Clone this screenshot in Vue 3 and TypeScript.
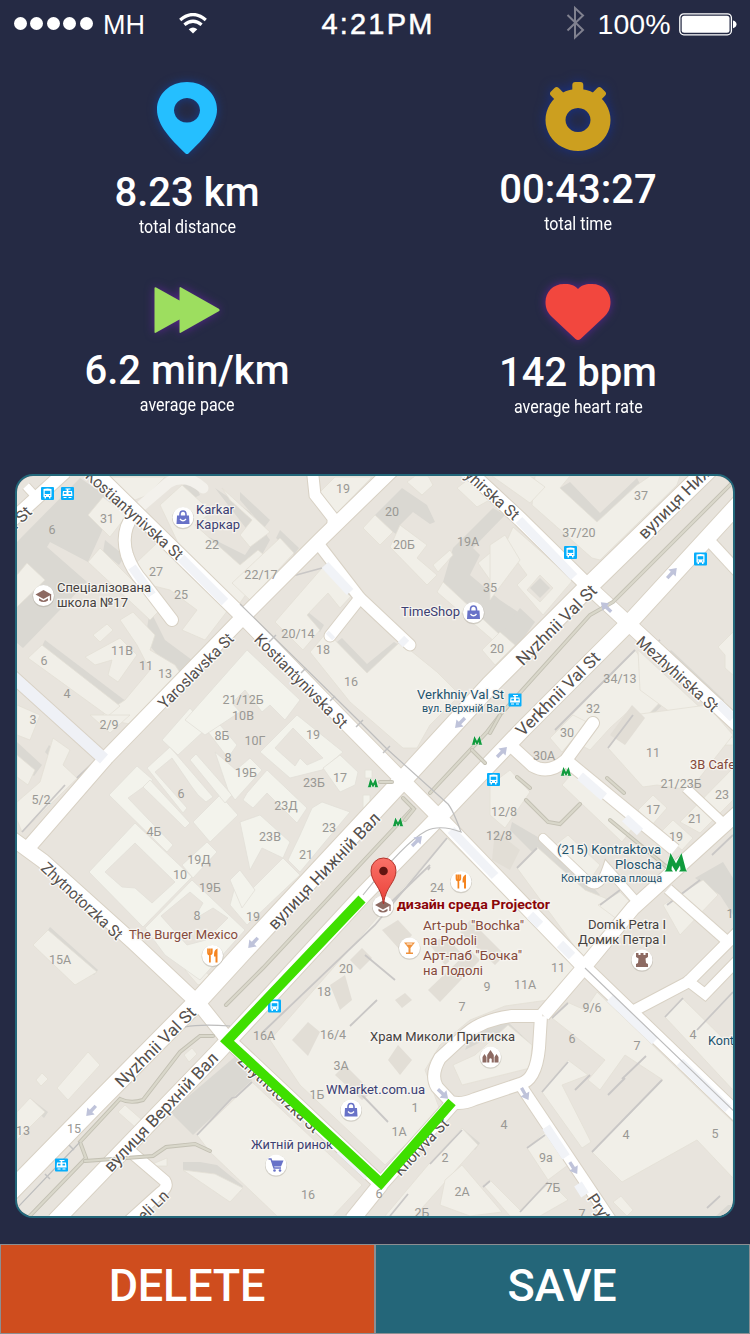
<script setup lang="ts">
interface Stat { kind: 'pin' | 'timer' | 'pace' | 'heart'; value: string; label: string; iconHeight: number; top: number; gap: number }
interface Road { d: string; w: number; round?: boolean; tint?: boolean }
interface Street { text: string; x: number; y: number; angle: number; length?: number; size?: number; anchor?: 'start' | 'middle' | 'end' }
interface Place { text: string; x: number; y: number; length: number; tone: string; size?: number }
type Spot = [number, number]
type HouseNumber = [string, number, number]
type Arrow = [number, number, number]

const stats: Stat[] = [
  { kind: 'pin', value: '8.23 km', label: 'total distance', iconHeight: 72, top: 0, gap: 19 },
  { kind: 'timer', value: '00:43:27', label: 'total time', iconHeight: 69, top: 0, gap: 19 },
  { kind: 'pace', value: '6.2 min/km', label: 'average pace', iconHeight: 46, top: 5, gap: 18 },
  { kind: 'heart', value: '142 bpm', label: 'average heart rate', iconHeight: 56, top: 2, gap: 13 },
]

const shades: string[] = [
  'M80 478L115 502L88 562L50 542L47 547L87 582L23 648L17 643V542Z',
  'M105 540L125 556L119 565L103 552Z', 'M150 610L165 640L192 660L178 680L145 640Z',
  'M45 640L127 702L117 712L40 650Z', 'M215 488L250 512L270 540L258 562L240 565L205 535L215 540L245 555L255 540Z',
  'M180 487L193 478L200 495L190 500Z', 'M240 492L270 520L264 528L240 500Z', 'M280 530L299 548L294 555L276 538Z',
  'M308 612L324 625L320 632L304 618Z', 'M333 645L368 675L399 645L394 642L367 664L342 638Z',
  'M375 515L402 488L427 505L435 522L430 524L413 512L400 525L412 535L405 540L390 530Z',
  'M453 548L493 508L505 515L473 548L480 555L470 575L500 600L518 612L505 640L443 582Z',
  'M560 488L597 526L640 484L637 478L600 513L570 482Z', 'M540 578L550 588L540 598L530 588Z',
  'M500 635L520 608L535 622L517 647Z', 'M671 650L724 700L719 706L665 657Z', 'M643 672L669 698L646 722L640 714L655 698L638 682Z',
  'M17 742L42 765L34 776L17 762Z', 'M49 745L64 759L58 766L45 752Z', 'M50 927L98 970L94 975L46 933Z',
  'M695 878L723 862L733 878V915L720 895Z', 'M512 822L560 850L600 895L593 904L545 865L510 830Z',
  'M237 1055L252 1080L193 1135L170 1112Z', 'M30 1098L48 1112L44 1118L28 1104Z', 'M183 1162H200L217 1165L243 1186L240 1192L215 1174L183 1171Z',
  'M462 1128L480 1143L475 1150L458 1135Z', 'M476 1022L508 1022L532 1045L526 1052L500 1032L465 1050Z', 'M716 1216L728 1205H733V1216Z',
]

const buildings: string[] = [
  'M103 477H165L148 495L135 500Z', 'M103 497L127 515L110 537L88 515Z', 'M17 575L27 563L45 580L17 607Z',
  'M100 548L150 598L160 610L150 620L88 562Z', 'M157 543L228 610L205 640L182 630L197 610L170 590L150 585L137 562Z',
  'M120 620L133 612L155 635L150 650L175 665L185 680L135 725L98 718L125 700L150 670L137 645Z', 'M85 657L120 638L137 655L118 682L108 675L112 660L95 665Z',
  'M93 635L107 624L113 630L100 642Z', 'M28 658L42 645L120 706L108 716Z', 'M17 705L40 715L30 740L17 735Z',
  'M160 505L182 485L212 512L195 525L240 565L258 550L270 560L235 610L187 562Z', 'M222 488L270 532L250 547L240 535L252 520L230 500Z',
  'M317 495L335 477H372L337 513Z', 'M280 538L294 553L250 600L232 583Z',
  'M322 568L352 595L340 608L328 593L307 615L320 630L303 650L275 622Z',
  'M310 652L327 632L367 673L400 642L437 672L460 695L430 725L417 748H403L350 702Z',
  'M363 528L375 515L393 532L380 545Z', 'M400 525L427 545L417 558L437 575L427 585L390 547Z', 'M433 565L450 550L453 555L438 572Z',
  'M443 582L500 635L495 642L437 592Z', 'M478 563L508 538V570L490 580Z', 'M482 650L500 632L515 645L495 665Z',
  'M407 482L415 476H428L433 485L422 495Z', 'M457 488L470 478L493 498L477 507Z',
  'M535 476H570L560 488L597 522L637 485L650 476H680L677 485L600 560L592 558L532 505Z', 'M492 476H530L545 487L530 503Z',
  'M513 527L573 580L543 615L517 585L527 575L505 545ZM540 575L527 590L540 602L553 588Z', 'M490 545L505 535L520 560L490 600Z',
  'M555 732L635 650L667 695L645 718L632 708L610 728L590 750Z', 'M638 650L733 738V745L715 745L640 690Z', 'M733 632L718 647L725 655V668L733 675Z',
  'M17 802L40 782L53 738L70 750L63 765L77 778L98 758L22 832L17 820Z', 'M17 755L35 770L28 785L17 777Z', 'M90 715H130L110 733Z',
  'M270 1040L447 838L492 882L580 965L548 1000L505 1006L470 1020L440 1045L425 1070L440 1110L385 1165L300 1085Z',
  'M608 748L633 715L707 705L733 735L690 790L657 785L643 787Z', 'M638 810L653 795L667 808L652 825Z',
  'M660 833L673 820L693 838L682 850Z', 'M680 822L733 768V800L700 833Z', 'M550 738L573 715L587 722L562 752Z',
  'M562 785L575 770L635 825L622 842Z', 'M490 785L510 770L530 792L505 828L490 815Z', 'M517 868L537 847L585 890L605 898L630 915L583 958Z',
  'M555 845L568 835L600 865L590 880Z', 'M663 905L703 880L718 895L680 935Z', 'M598 905L620 892L640 912L625 925Z',
  'M597 992L733 1122V1178L697 1140L622 1182L592 1152L663 1080L625 1055L600 1090L588 1080L605 1060L552 1018L567 1002L585 1010Z',
  'M665 1017L682 998L733 1048V1090Z', 'M542 1092L568 1060L588 1075L562 1085L591 1142L582 1148Z', 'M527 1148L545 1132L572 1162L548 1180Z',
  'M428 1165L462 1128L478 1145L415 1216H385Z', 'M445 1180L462 1165L502 1212L470 1216L440 1205Z', 'M483 1185L490 1180L520 1210L550 1182L568 1200L540 1216H510Z',
  'M453 1065L475 1055L508 1025L532 1045L530 1068L462 1085Z', 'M197 1135L252 1082L362 1185L333 1216H277L210 1152Z',
  'M57 1088L88 1052L100 1065L68 1100Z', 'M36 1080L42 1073L48 1079L41 1086Z', 'M17 1112L30 1098L45 1112L17 1140Z', 'M33 945L48 930L97 972L75 985Z',
  'M183 1170L215 1174L243 1188L230 1202Z', 'M118 1112L125 1105L142 1120L135 1127Z', 'M184 1055L192 1048L197 1054L189 1062Z', 'M150 1165L167 1158V1166H152Z',
  'M613 1202L621 1196L633 1210L627 1216Z', 'M185 970L197 965L215 980L198 985Z',
]

const courtyards: string[] = [
  'M109 795L137 766L153 780L128 798L173 845L167 852Z', 'M143 787L150 780L190 823L185 828Z',
  'M147 768L170 747L213 797L206 802L198 795L192 787L172 758L155 772L187 808L183 813Z', 'M193 822L220 795L238 815L210 842Z',
  'M89 872L135 823L192 877L143 927ZM105 872L122 887L135 888L152 903L175 882L135 843Z',
  'M145 928L192 880L245 930L200 980L165 955ZM161 916L190 892L203 903L193 920L213 908L228 918L206 940L187 945Z',
  'M182 865L207 842L217 852L193 878Z', 'M162 740L190 708L207 728L178 755Z', 'M205 728L215 719L237 745L228 758Z', 'M190 760L196 754L232 795L225 803Z',
  'M185 720L247 650L300 700L285 720L270 705L262 712L245 690L232 703L240 712L205 735Z', 'M235 800L262 770L250 758L236 770L215 752L228 790Z',
  'M260 752L297 715L343 752L322 770L290 778ZM275 748L293 728L323 758L307 765L300 758L295 766Z',
  'M323 768L340 755L358 772L355 785L340 792Z', 'M247 793L267 770L307 808L297 823L267 793L253 808L243 800Z',
  'M312 808L322 802L350 812L300 872L288 860L300 835Z', 'M240 822L260 815L290 842L283 858L262 848L250 870Z',
  'M283 858L300 875L247 925L230 905L238 875L246 895Z', 'M365 770H372V778H365Z', 'M363 795H370V808H363Z', 'M230 880L240 870L255 890L242 908Z',
]

const patches: string[] = [
  'M382 930L398 920L412 935L400 950Z', 'M430 945L445 935L460 952L445 965Z', 'M292 1040L308 1022L320 1032L308 1056Z', 'M330 985L345 975L352 1000L340 1010Z',
  'M350 960L362 948L372 958L360 970Z', 'M335 1075L345 1065L372 1092L362 1100Z', 'M470 920L505 955L495 965L460 932Z', 'M398 1045L412 1060L400 1075L388 1060Z',
  'M395 1000L405 993L412 1000L402 1008Z', 'M428 990L470 950L480 960L440 1002Z', 'M632 705L645 718L625 745L610 735Z', 'M495 830L520 850L510 870L492 860Z',
]

const edges: string[] = [
  'M263 1032L375 925L447 838', 'M383 910L430 865', 'M197 1135L232 1098L236 1097L252 1082', 'M552 1018L568 1003', 'M592 1152L662 1080M622 1079L646 1056M575 1090L590 1075M608 1095L625 1078',
  'M665 1017L683 998M697 1030L733 992', 'M517 868L537 848M600 905L620 890M667 905L700 880', 'M608 748L633 715M555 730L635 650M648 650L660 640', 'M527 1148L545 1135M520 1212L548 1182M483 1187L490 1181',
  'M542 1092L568 1062M430 1164L462 1130M388 1122L360 1093M390 1216L408 1194', 'M22 832L65 785M77 778L98 758', 'M267 583L322 568M267 588L288 565M183 568L228 610', 'M315 545L350 595', 'M712 855L733 835M707 1208L720 1196', 'M350 1026L377 1000M365 955L395 980M428 870L430 867',
]

const roads: Road[] = [
  { d: 'M93 470L243 617L345 722L440 818L585 968L740 1117', w: 14 }, { d: 'M395 467L320 540L243 617L107 757L28 848', w: 14 },
  { d: 'M10 837L43 861L133 942L200 1005L228 1040L381 1184', w: 14 }, { d: 'M711 467L590 585L490 685L400 783L240 955L197 1002L100 1100L10 1192', w: 18 },
  { d: 'M742 500L630 622L523 729L440 816L363 895L217 1053L55 1221', w: 16 }, { d: 'M464 467L520 519L590 588L630 625L740 727', w: 14 },
  { d: 'M704 535L742 576', w: 11 }, { d: 'M312 467L315 495L333 518V530', w: 11 }, { d: 'M320 546L360 598L410 645', w: 11, round: true }, { d: 'M360 598L330 636', w: 11, round: true },
  { d: 'M134 514Q120 532 127 555Q132 570 143 582L172 620', w: 12, round: true }, { d: 'M10 522L65 472', w: 13 }, { d: 'M26 486L36 497', w: 8 },
  { d: 'M10 674L104 759', w: 12, tint: true }, { d: 'M510 745L533 766Q549 775 566 760L593 723', w: 12, round: true }, { d: 'M568 762L675 850', w: 12 },
  { d: 'M740 811L633 908L585 966L543 1015', w: 14 }, { d: 'M686 788L722 822', w: 9 }, { d: 'M543 838L590 883Q600 889 607 868L637 902', w: 8, round: true },
  { d: 'M668 889L728 942', w: 10 }, { d: 'M635 1010L688 982L740 930', w: 11 }, { d: 'M688 981L705 994L740 958', w: 10, round: true },
  { d: 'M542 1016H512Q484 1019 466 1034L440 1058Q430 1075 437 1087L451 1102Q462 1105 475 1099L520 1084Q536 1080 539 1048L541 1016', w: 12 },
  { d: 'M521 1086L612 1222', w: 11 }, { d: 'M381 1184L453 1103', w: 14 }, { d: 'M381 1184L352 1220', w: 15 }, { d: 'M131 1152L165 1181Q169 1187 160 1193L130 1220', w: 11, round: true },
]

const tints: string[] = [
  'M181 558L225 602', 'M519 520L574 577', 'M325 565L350 592', 'M329 637L332 634', 'M401 639L406 644', 'M132 567L152 595', 'M451 830L495 876', 'M530 915L540 925M560 944L572 956',
  'M610 998L655 1041M680 1062L728 1109', 'M546 1127L566 1157M578 1184L585 1195', 'M340 1150L368 1176', 'M718 703L733 718', 'M580 776L604 797M625 818L640 832',
]

const greenways: string[] = [
  'M738 477L613 602L590 615L500 715L487 732L430 793', 'M413 808L263 968L226 1005', 'M403 798L414 809L405 820', 'M213 1036H200L180 1052L143 1100Q130 1104 120 1099L80 1142L86 1158L25 1221',
  'M85 1161L153 1156L166 1147L195 1144L210 1151', 'M526 800L548 822L560 824L580 804', 'M610 820L668 868M607 778L624 793M517 777L530 788M472 750L485 763', 'M380 782H392M490 733L500 715',
]

const streets: Street[] = [
  { text: 'Kostiantynivska St', x: 134.5, y: 515, angle: 42, length: 125 }, { text: 'Kostiantynivska St', x: 301, y: 681, angle: 45.5, length: 125 },
  { text: 'Yaroslavska St', x: 196, y: 671, angle: -45, length: 99 }, { text: 'Nyzhnii Val St', x: 556.5, y: 625, angle: -45, length: 106, size: 17 },
  { text: 'Verkhnii Val St', x: 558, y: 694, angle: -45, length: 111, size: 17 }, { text: 'вулиця Нижній', x: 641, y: 536, angle: -45, length: 121, size: 17, anchor: 'start' },
  { text: 'Mezhyhirska St', x: 677.5, y: 674, angle: 42, length: 104 }, { text: 'Mezhyhirska St', x: 517, y: 517, angle: 42, length: 104, anchor: 'end' },
  { text: 'вулиця Нижній Вал', x: 324, y: 871, angle: -46.5, length: 154, size: 17 }, { text: 'Zhytnotorzka St', x: 82, y: 901, angle: 43, length: 105 },
  { text: 'Nyzhnii Val St', x: 155.500, y: 1047, angle: -45, length: 106, size: 17 }, { text: 'вулиця Верхній Вал', x: 161, y: 1112, angle: -46.5, length: 157, size: 17 },
  { text: 'eli Ln', x: 166, y: 1193, angle: -44, length: 36, anchor: 'end' }, { text: '. St', x: 29, y: 509, angle: -45, length: 24, anchor: 'end' },
  { text: 'Pryty', x: 591, y: 1195, angle: 57, length: 37, anchor: 'start' }, { text: 'Khoryva St', x: 421, y: 1147, angle: -47, length: 72 },
  { text: 'Zhytnotorzka St', x: 279, y: 1094, angle: 43, length: 105 },
]

const numbers: HouseNumber[] = [
  ['19', 343, 489], ['37', 641, 496], ['6', 52, 530], ['31', 107, 519], ['22', 212, 545], ['20', 392, 512], ['20Б', 404, 545], ['19А', 468, 542], ['37/20', 579, 533],
  ['22/17', 261, 575], ['27', 156, 572], ['25', 181, 595], ['35', 490, 588], ['20/14', 298, 634], ['18', 323, 650], ['16', 351, 682], ['20', 497, 649], ['34/13', 620, 679],
  ['11В', 122, 651], ['11', 146, 666], ['13', 165, 674], ['6', 44, 661], ['4', 67, 694], ['3', 33, 720], ['2/9', 109, 725], ['32', 593, 709], ['21/12Б', 243, 700],
  ['10В', 243, 716], ['8Б', 222, 736], ['10Г', 255, 741], ['19', 313, 735], ['8', 228, 758], ['19Б', 246, 773], ['23Б', 314, 783], ['17', 340, 778], ['30', 567, 733],
  ['30А', 544, 756], ['11', 653, 753], ['21/23Б', 681, 784], ['5/2', 41, 800], ['6', 181, 794], ['23Д', 286, 806], ['17', 653, 810], ['21', 695, 819], ['23', 722, 795],
  ['4Б', 154, 832], ['23В', 270, 837], ['23', 329, 828], ['12/8', 504, 812], ['12/8', 499, 836], ['19', 676, 837], ['19Д', 199, 860], ['21', 306, 855], ['10', 180, 875], ['19Б', 210, 888],
  ['24', 437, 888], ['8', 197, 916], ['19', 253, 917], ['15А', 60, 960], ['20', 346, 969], ['18', 324, 992], ['9', 487, 987], ['11А', 525, 985], ['11', 558, 968], ['16А', 264, 1036],
  ['16/4', 333, 1035], ['7', 462, 1007], ['9/6', 592, 1008], ['6', 572, 1039], ['7', 637, 1046], ['4', 693, 1035], ['3А', 341, 1066], ['1Б', 317, 1095], ['1', 415, 1108],
  ['1А', 399, 1132], ['13', 23, 1131], ['15', 74, 1129], ['2', 445, 1158], ['4', 504, 1125], ['4', 626, 1135], ['5', 715, 1134], ['9а', 546, 1158], ['2А', 462, 1192], ['7Б', 553, 1188],
  ['2Б', 422, 1213], ['16', 308, 1195], ['6', 379, 1194], ['7', 582, 1214], ['1', 730, 914],
]

const places: Place[] = [
  { text: 'Karkar', x: 196, y: 510, length: 38, tone: 'shop' }, { text: 'Каркар', x: 196, y: 525, length: 44, tone: 'shop' },
  { text: 'Спеціалізована', x: 57, y: 588, length: 94, tone: 'plain' }, { text: 'школа №17', x: 57, y: 603, length: 71, tone: 'plain' },
  { text: 'TimeShop', x: 401, y: 612, length: 59, tone: 'shop' }, { text: 'Verkhniy Val St', x: 417, y: 695, length: 87, tone: 'transit' },
  { text: 'вул. Верхній Вал', x: 422, y: 708, length: 83, tone: 'transit', size: 11 }, { text: '3B Cafe', x: 690, y: 765, length: 45, tone: 'food' },
  { text: '(215) Kontraktova', x: 557, y: 850, length: 104, tone: 'transit' }, { text: 'Ploscha', x: 615, y: 865, length: 47, tone: 'transit' },
  { text: 'Контрактова площа', x: 561, y: 878, length: 101, tone: 'transit', size: 11 }, { text: 'The Burger Mexico', x: 129, y: 935, length: 109, tone: 'food' },
  { text: 'дизайн среда Projector', x: 397, y: 905, length: 153, tone: 'target' }, { text: 'Art-pub "Bochka"', x: 423, y: 926, length: 101, tone: 'food' },
  { text: 'na Podoli', x: 423, y: 941, length: 54, tone: 'food' }, { text: 'Арт-паб "Бочка"', x: 423, y: 956, length: 99, tone: 'food' }, { text: 'на Подолі', x: 423, y: 970.500, length: 60, tone: 'food' },
  { text: 'Domik Petra I', x: 588, y: 925, length: 78, tone: 'plain' }, { text: 'Домик Петра I', x: 578, y: 940, length: 88, tone: 'plain' },
  { text: 'Храм Миколи Притиска', x: 370, y: 1037, length: 145, tone: 'plain' }, { text: 'WMarket.com.ua', x: 326, y: 1090, length: 99, tone: 'shop' },
  { text: 'Житній ринок', x: 251, y: 1145, length: 82, tone: 'shop' }, { text: 'Kont', x: 708, y: 1041, length: 26, tone: 'transit' },
]

const buses: Spot[] = [[47.5, 493.5], [570.5, 552.5], [700.5, 559], [493.5, 779.5], [274.5, 1006]]
const trams: Spot[] = [[67.5, 493.5], [515, 700], [61.5, 1165]]
const bags: Spot[] = [[183, 517.5], [473.5, 612.5], [351, 1110]]
const caps: Spot[] = [[43.5, 595.5], [383, 906]]
const forks: Spot[] = [[461, 881.5], [212.5, 955.5]]
const metros: Spot[] = [[477, 740.5], [373, 783], [398, 822], [566, 771.5]]
const arrows: Arrow[] = [[672, 573, -47], [606, 607, -138], [460, 723, 135], [253, 943, 133], [417, 841, -45], [502, 752, -45], [91, 1111, 133], [443, 1094, 43], [525, 1094, 60], [573.5, 1168, 58]]
</script>

<template>
  <div class="screen">
    <header class="status">
      <div class="carrier">
        <span v-for="n in 5" :key="n" class="dot" />
        <span class="name">MH</span>
        <svg class="wifi" width="28" height="21" viewBox="0 0 28 21">
          <path d="M14 20.5L9.7 16.2Q14 12.8 18.3 16.2Z" fill="#fff" />
          <path d="M5.400 11.700Q14 4.800 22.600 11.700M1.200 6.900Q14 -3.800 26.800 6.900" fill="none" stroke="#fff" stroke-width="3.300" />
        </svg>
      </div>
      <div class="clock">4:21PM</div>
      <div class="power">
        <svg class="bluetooth" width="19" height="36" viewBox="0 0 19 36"><path d="M1.5 10L17 25L9 32.5V3L17 10.500L1.500 25.500" fill="none" stroke="#80818f" stroke-width="2" /></svg>
        <span class="percent">100%</span>
        <svg width="58" height="23" viewBox="0 0 58 23">
          <rect x=".8" y=".8" width="51.600" height="21" rx="4" fill="none" stroke="#fff" stroke-width="1.300" />
          <rect x="2.700" y="2.800" width="47.800" height="17" rx="2.500" fill="#fff" />
          <path d="M54 7.500Q57.500 8.500 57.500 11.300T54 15.200Z" fill="#fff" />
        </svg>
      </div>
    </header>

    <section class="stats">
      <article v-for="s in stats" :key="s.kind" class="stat" :class="s.kind" :style="{ paddingTop: s.top + 'px' }">
        <svg v-if="s.kind === 'pin'" class="icon cool" width="60" :height="s.iconHeight" viewBox="0 0 60 72">
          <path fill="#25bfff" fill-rule="evenodd" d="M30 0C13 0 0 12 0 27.500C0 43 13.500 57 28.500 71.400Q30 72.600 31.500 71.400C46.500 57 60 43 60 27.500C60 12 47 0 30 0ZM30 16A13 12.300 0 1 1 29.990 16Z" />
        </svg>
        <svg v-else-if="s.kind === 'timer'" class="icon blue" width="66" :height="s.iconHeight" viewBox="0 0 66 69">
          <g fill="#cc9f1f">
            <rect x="27.300" y="0" width="11" height="14" rx="3" />
            <rect x="-5.500" y="-6" width="11" height="14" rx="3" transform="translate(12 12) rotate(-45)" />
            <rect x="-5.500" y="-6" width="11" height="14" rx="3" transform="translate(54 12) rotate(45)" />
            <path fill-rule="evenodd" d="M33 7A32.500 31 0 1 1 32.990 7ZM33 26A12.500 12 0 1 0 33.010 26Z" />
          </g>
        </svg>
        <svg v-else-if="s.kind === 'pace'" class="icon violet" width="66" :height="s.iconHeight" viewBox="0 0 66 46">
          <path fill="#9dde5f" d="M.5 1.200Q.5-.4 2.200.4L25.500 13.600V1Q25.500-.4 27.200.4L64.800 21.700Q66.500 23 64.800 24.300L27.200 45.600Q25.500 46.500 25.500 45V32.400L2.200 45.600Q.5 46.500.5 45Z" />
        </svg>
        <svg v-else class="icon violet" width="66" :height="s.iconHeight" viewBox="0 0 66 56">
          <path fill="#f2473e" d="M33 5C38 0 42 0 47 0C58 0 65.500 8 65.500 18C65.500 25 63 29 59 33L35.500 55Q33 57 30.500 55L7 33C3 29 .5 25 .5 18C.5 8 8 0 19 0C24 0 28 0 33 5Z" />
        </svg>
        <div class="value" :style="{ marginTop: s.gap + 'px' }">{{ s.value }}</div>
        <div class="label">{{ s.label }}</div>
      </article>
    </section>

    <section class="map">
      <svg width="716" height="740" viewBox="17 476 716 740">
        <defs>
          <linearGradient id="markerFill" x2="0" y2="1"><stop stop-color="#fa7268" /><stop offset="1" stop-color="#ea4038" /></linearGradient>
          <g id="busGlyph"><rect x="-6.500" y="-6.500" width="13" height="13" rx="1" fill="#06aefb" /><path d="M-4-4.500Q0-5.500 4-4.500V3.500H3V5H1.500V3.500H-1.500V5H-3V3.500H-4Z" fill="#fff" /><path d="M-2.800-2.800H2.800V.4H-2.800Z" fill="#06aefb" /><path d="M-2.700 1.500h1.200v1h-1.200zM1.500 1.500h1.200v1h-1.200z" fill="#06aefb" /></g>
          <g id="tramGlyph"><rect x="-6.500" y="-6.500" width="13" height="13" rx="1" fill="#06aefb" /><path d="M-4.500-2.500H-.8V-4H-2V-5H3V-4H.8V-2.500H4.500L5 2.500H-5ZM-4 3.500H-1V4.500H-4ZM1 3.500H4V4.500H1Z" fill="#fff" /><path d="M-3.600-1.300H-1V.6H-3.600ZM1-1.300H3.600V.6H1Z" fill="#06aefb" /></g>
          <g id="disc"><circle cy=".7" r="11" fill="#8a8378" opacity=".3" /><circle r="10.500" fill="#fff" /></g>
          <g id="bag"><use href="#disc" /><path d="M-6-2H6L6.500 6.500H-6.500Z" fill="#6872c8" /><path d="M-3-1V-3Q-3-6.500 0-6.500T3-3V-1" fill="none" stroke="#6872c8" stroke-width="1.600" /><path d="M-3 1.500Q0 5 3 1.500" fill="none" stroke="#fff" stroke-width="1.300" /></g>
          <g id="cap"><use href="#disc" /><path d="M-8-1L0-5.500L8-1L0 3.500ZM-4.500 2.800L0 5.300L4.500 2.800V5Q0 8-4.500 5Z" fill="#8d6a62" /><path d="M7-1V5" stroke="#8d6a62" stroke-width="1.300" /></g>
          <g id="fork"><use href="#disc" /><path d="M-4.500-7V-3Q-4.500-1-2.600-1T-.7-3V-7M-2.600-7V7" fill="none" stroke="#f5841f" stroke-width="1.700" /><path d="M5-7V7H3V1H1.500Q1-6 5-7Z" fill="#f5841f" /></g>
          <path id="metro" d="M-11.500 9L-10 7.500L-5.500-9.500L0 1L5.500-9.500L10 7.500L11.500 9H3L4.500 7L4 3L0 9.500L-4 3L-4.500 7L-3 9Z" fill="#109b3d" stroke="#fff" stroke-width="1" paint-order="stroke" />
          <path id="arrow" d="M-7-1.700H0V-5L7 0L0 5V1.700H-7Z" fill="#bfc3da" />
        </defs>

        <rect x="17" y="476" width="716" height="740" fill="#e8e4dd" />
        <g class="shades"><path v-for="(d, i) in shades" :key="i" :d="d" /></g>
        <g class="buildings"><path v-for="(d, i) in buildings" :key="i" :d="d" /></g>
        <g class="courtyards"><path v-for="(d, i) in courtyards" :key="i" :d="d" /></g>
        <g class="patches"><path v-for="(d, i) in patches" :key="i" :d="d" /></g>
        <g class="edges"><path v-for="(d, i) in edges" :key="i" :d="d" /></g>
        <path class="faint-road" d="M140 507L168 483Q185 472 203 488" />

        <g class="lines">
          <path v-for="(r, i) in roads" :key="'c' + i" :d="r.d" stroke="#d8d1c4" :stroke-width="r.w + 2" :stroke-linecap="r.round ? 'round' : 'butt'" />
          <path v-for="(r, i) in roads" :key="'r' + i" :d="r.d" :stroke="r.tint ? '#eff1f6' : '#fff'" :stroke-width="r.w" :stroke-linecap="r.round ? 'round' : 'butt'" />
          <path v-for="(d, i) in tints" :key="'t' + i" :d="d" stroke="#f1f3f7" stroke-width="9" />
          <g v-for="(d, i) in greenways" :key="'g' + i"><path :d="d" stroke="#c3c0b3" stroke-width="4" stroke-linecap="round" /><path :d="d" stroke="#d9d7ca" stroke-width="2.200" stroke-linecap="round" /></g>
          <path d="M240 604L360 722L387 749L448 804Q453 810 461 832Q440 824 426 831Q405 842 363 895M230 1026Q200 1024 185 1027M80 1142L17 1208M585 968L740 1117" stroke="#bdbdbd" stroke-width="1.200" />
          <path d="M269 642l7-7M301 673l5-5M330 701l5-5M356 727l7-7M383 753l7-7M45 1174l5 5M69 1145l5 5" stroke="#c2c2c2" stroke-width="1.500" />
        </g>
        <use v-for="([x, y, a], i) in arrows" :key="'a' + i" href="#arrow" :transform="`translate(${x} ${y}) rotate(${a})`" />

        <g class="numbers"><text v-for="([t, x, y], i) in numbers" :key="i" :x="x" :y="y" dy=".33em">{{ t }}</text></g>
        <g class="streets">
          <text v-for="(s, i) in streets" :key="i" :transform="`translate(${s.x} ${s.y}) rotate(${s.angle})`" dy=".34em" :font-size="s.size ?? 16" :text-anchor="s.anchor ?? 'middle'" :textLength="s.length" lengthAdjust="spacingAndGlyphs">{{ s.text }}</text>
        </g>
        <g class="places">
          <text v-for="(p, i) in places" :key="i" :class="p.tone" :x="p.x" :y="p.y" dy=".32em" :font-size="p.size ?? 13" :textLength="p.length" lengthAdjust="spacingAndGlyphs">{{ p.text }}</text>
        </g>

        <use v-for="([x, y], i) in buses" :key="'b' + i" href="#busGlyph" :x="x" :y="y" />
        <use v-for="([x, y], i) in trams" :key="'t' + i" href="#tramGlyph" :x="x" :y="y" />
        <use v-for="([x, y], i) in bags" :key="'s' + i" href="#bag" :x="x" :y="y" />
        <use v-for="([x, y], i) in caps" :key="'k' + i" href="#cap" :x="x" :y="y" />
        <use v-for="([x, y], i) in forks" :key="'f' + i" href="#fork" :x="x" :y="y" />
        <g transform="translate(409.5 948)"><use href="#disc" /><path d="M-5.500-5.500H5.500L1 0V4.500H3.500V6H-3.500V4.500H-1V0Z" fill="#f0923c" /><path d="M-2.800-4H2.800" stroke="#fff" /></g>
        <g transform="translate(642 960)"><use href="#disc" /><path d="M-6-7H-3.500V-5H-1.500V-7H1.500V-5H3.500V-7H6V-3L3.500-1.500L4 3L6 4V7H-6V4L-4 3L-3.500-1.500L-6-3Z" fill="#8d6a62" /></g>
        <g transform="translate(490.500 1057)"><use href="#disc" /><path d="M-8 5.500V0L-6-3L-4 0V5.500ZM4 5.500V0L6-3L8 0V5.500ZM-3.300 5.500V-2L0-7L3.300-2V5.500H1.200V2Q0 .5-1.200 2V5.500Z" fill="#8d6a62" /></g>
        <g transform="translate(276 1165)"><use href="#disc" /><path d="M-4.500-4.500H7.500L5 1.500H-3Z" fill="#6872c8" /><path d="M-7.500-6H-5L-2 3H5" fill="none" stroke="#6872c8" stroke-width="1.400" /><circle cx="-1.500" cy="5.500" r="1.300" fill="#6872c8" /><circle cx="4" cy="5.500" r="1.300" fill="#6872c8" /></g>
        <use v-for="([x, y], i) in metros" :key="'m' + i" href="#metro" :transform="`translate(${x} ${y}) scale(.48)`" />
        <use href="#metro" x="676" y="862.500" />

        <g transform="translate(383.500 858)">
          <path d="M0 46C-2 28-12.500 25-12.500 12.500A12.500 12.500 0 0 1 12.500 12.500C12.500 25 2 28 0 46Z" fill="url(#markerFill)" stroke="#b3342c" />
          <circle cy="13" r="4.300" fill="#621410" />
        </g>
        <path d="M362 899L227 1041L381 1183L452 1102" fill="none" stroke="#3fdf00" stroke-width="9.800" />
      </svg>
    </section>

    <footer class="actions">
      <button class="action delete" type="button">DELETE</button>
      <button class="action save" type="button">SAVE</button>
    </footer>
  </div>
</template>

<style>
body { margin: 0; background: #252a44; }
</style>

<style scoped>
.screen { width: 750px; height: 1334px; display: flex; flex-direction: column; overflow: hidden; background: #252a44; color: #fff; font-family: Roboto, sans-serif; }
.status { height: 48px; display: grid; grid-template-columns: 1fr auto 1fr; align-items: center; padding: 0 14px; font-family: "Liberation Sans", sans-serif; line-height: 48px; white-space: nowrap; }
.carrier { display: flex; align-items: center; gap: 3.3px; }
.dot { width: 13.1px; height: 13.1px; border-radius: 50%; background: #fff; margin-top: -1px; }
.name { margin-left: 7px; font-size: 27px; height: 47px; }
.wifi { margin-left: 31px; margin-top: -2px; }
.clock { font-size: 29px; letter-spacing: 2.2px; margin-left: 6px; -webkit-text-stroke: .5px #fff; }
.power { display: flex; align-items: center; justify-content: flex-end; margin-right: -1px; }
.bluetooth { margin-right: 13px; margin-top: -2px; }
.percent { font-size: 28.5px; margin-right: 8.5px; }
.stats { height: 426px; box-sizing: border-box; padding-top: 34px; display: grid; grid-template-columns: 375px 375px; grid-template-rows: 200px 1fr; }
.stat { display: flex; flex-direction: column; align-items: center; }
.stat:nth-child(even) { padding-left: 31px; }
.stat:nth-child(odd) { padding-right: 1px; }
.icon { display: block; overflow: visible; flex: none; }
.cool { filter: drop-shadow(0 0 5px #173c86); }
.blue { filter: drop-shadow(0 0 6px #16308a); }
.violet { filter: drop-shadow(0 0 5px #5a2590); }
.value { font-size: 40px; font-weight: 500; line-height: 40px; white-space: nowrap; }
.label { font-size: 18px; line-height: 24px; margin-top: 2px; transform: scaleX(.89); white-space: nowrap; }
.map { width: 716px; height: 740px; margin-left: 15px; border: 2px solid #23677a; border-radius: 18px; overflow: hidden; flex: none; }
.map svg { display: block; font-family: Roboto, "Noto Sans", sans-serif; }
.shades path { fill: #dad8d2; }
.buildings path { fill: #f1efe8; stroke: #e3dfd6; stroke-width: .8; fill-rule: evenodd; }
.courtyards path { fill: #f3f3ec; stroke: #e2e0d8; stroke-width: .8; fill-rule: evenodd; }
.patches path { fill: #e2ded6; }
.edges path { fill: none; stroke: #c9c7c6; stroke-width: 1.8; }
.faint-road { fill: none; stroke: #f3f1ec; stroke-width: 11; stroke-linecap: round; }
.lines path { fill: none; }
.numbers text { fill: #999894; font-size: 12.5px; text-anchor: middle; }
.streets text { fill: #55504d; stroke: #fff; stroke-width: 2.5px; stroke-opacity: .8; paint-order: stroke; }
.places text { stroke: #f8f6f2; stroke-width: 2.5px; stroke-opacity: .85; paint-order: stroke; }
.shop { fill: #3c4073; }
.plain { fill: #46423f; }
.food { fill: #854a3c; }
.transit { fill: #1d536e; }
.target { fill: #8b0508; font-weight: 700; }
.actions { margin-top: 26px; height: 90px; display: grid; grid-template-columns: 1fr 1fr; }
.action { border: 1px solid #8c8e92; padding: 0 1px 6px 0; margin: 0; color: #fff; font: 500 45px/80px Roboto, sans-serif; letter-spacing: -.2px; }
.delete { background: #cf4d1e; }
.save { background: #246679; }
</style>
